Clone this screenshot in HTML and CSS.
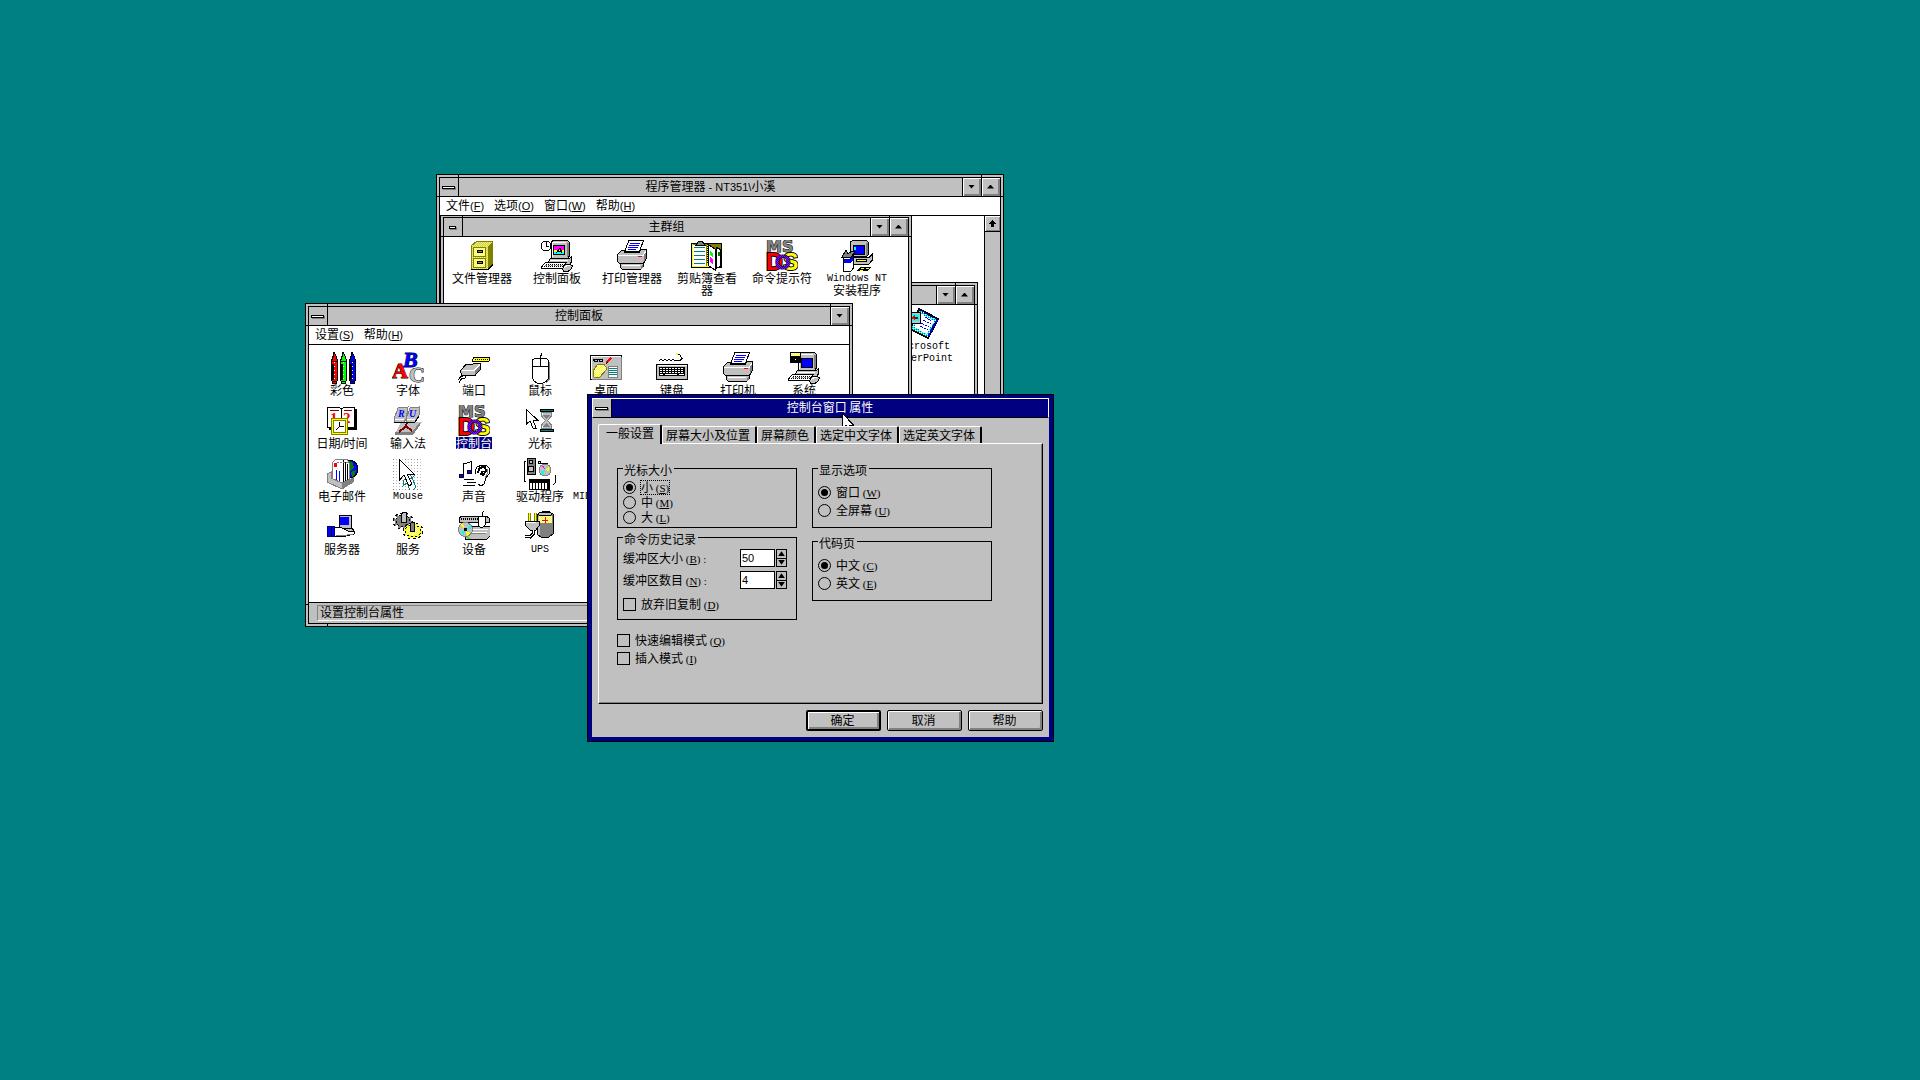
FILE: index.html
```html
<!DOCTYPE html>
<html lang="zh-CN">
<head>
    <meta charset="UTF-8">
    <meta name="viewport" content="width=device-width, initial-scale=1.0">
    <title>程序管理器</title>
    <link rel="stylesheet" href="styles.css">
</head>
<body>
    <!-- Shared drawings -->
    <svg class="sprites" width="0" height="0">
        <defs>
            <pattern id="dither-yellow" width="2" height="2" patternUnits="userSpaceOnUse">
                <rect width="2" height="2" fill="#ffff00"/>
                <rect width="1" height="1" fill="#ffffff"/>
                <rect x="1" y="1" width="1" height="1" fill="#ffffff"/>
            </pattern>
            <pattern id="dither-gold" width="2" height="2" patternUnits="userSpaceOnUse">
                <rect width="2" height="2" fill="#ffff00"/>
                <rect width="1" height="1" fill="#c0c0c0"/>
                <rect x="1" y="1" width="1" height="1" fill="#c0c0c0"/>
            </pattern>
            <pattern id="dither-purple" width="2" height="2" patternUnits="userSpaceOnUse">
                <rect width="2" height="2" fill="#0000ff"/>
                <rect width="1" height="1" fill="#c000c0"/>
                <rect x="1" y="1" width="1" height="1" fill="#c000c0"/>
            </pattern>
            <pattern id="dither-cyan" width="2" height="2" patternUnits="userSpaceOnUse">
                <rect width="2" height="2" fill="#00ffff"/>
                <rect width="1" height="1" fill="#ffffff"/>
                <rect x="1" y="1" width="1" height="1" fill="#008080"/>
            </pattern>
            <pattern id="grid-dots" width="6" height="6" patternUnits="userSpaceOnUse">
                <rect x="1" y="1" width="1" height="1" fill="#808080"/>
                <rect x="4" y="1" width="1" height="1" fill="#c0c0c0"/>
                <rect x="1" y="4" width="1" height="1" fill="#c0c0c0"/>
                <rect x="4" y="4" width="1" height="1" fill="#c0c0c0"/>
            </pattern>
        </defs>
        <symbol id="printer" viewBox="0 0 32 32">
            <path d="M13 .5H27.5L23.5 11.5H8.500Z" fill="#fff" stroke="#000"/>
            <path d="M14 3.500H24M13 5.500H23M12 7.500H22M12 9.500H20" stroke="#0000ff"/>
            <path d="M1.500 14.500L5.500 10.500H9L8.500 12.500H23L25 9.500H30.500V18L27.500 23.500H3.500L1.500 21.500Z" fill="#c0c0c0" stroke="#000"/>
            <path d="M2 15.500H27L30 11" fill="none" stroke="#fff"/>
            <path d="M28 15V22L30 18V12Z" fill="#808080"/>
            <path d="M22 16.500H26" stroke="#ff0000"/>
            <path d="M5.500 23.500H27.500V26L24.500 29.500H6.500L4.500 27.500V24.500Z" fill="#c0c0c0" stroke="#000"/>
            <path d="M6 25.500H24" stroke="#fff"/>
            <path d="M25 29V26L27 24V27Z" fill="#808080"/>
        </symbol>
        <symbol id="pc" viewBox="0 0 32 32">
            <path d="M10.500 1.500L12.500 .5H26.500L28.500 2.500V16L26.500 18.500H10.500Z" fill="#c0c0c0" stroke="#000"/>
            <path d="M11.500 17V2.500H25" fill="none" stroke="#fff"/>
            <path d="M26 3V18L28 15V3Z" fill="#808080"/>
            <path d="M9.500 18.500H28L30.500 17V22L27.500 25.500H6L8.500 19.500Z" fill="#c0c0c0" stroke="#000"/>
            <path d="M9 20.500H27" stroke="#fff"/>
            <path d="M4.500 22.500H25.500L21.500 28.500H.5V27Z" fill="#fff" stroke="#000"/>
            <path d="M5 24.500H24M3 26.500H22" stroke="#000" stroke-dasharray="1 1"/>
            <path d="M4 25.500H23" stroke="#808080" stroke-dasharray="2 1"/>
            <path d="M22.500 26L25 24.500H29L31.500 25.500L30 29L27 31.500H23L21.500 29.500Z" fill="#c0c0c0" stroke="#000"/>
            <path d="M23 28L26 25.500H29" fill="none" stroke="#fff"/>
        </symbol>
    </svg>

    <main class="desktop">
        <!-- Program Manager -->
        <section class="window program-manager">
            <div class="frame">
                <header class="title-bar">
                    <button class="sys-menu" aria-label="系统菜单"><span></span></button>
                    <h1 class="title">程序管理器<span class="latin"> - NT351\</span>小溪</h1>
                    <button class="size-btn" aria-label="最小化"><span class="arrow down"></span></button>
                    <button class="size-btn" aria-label="最大化"><span class="arrow up"></span></button>
                </header>
                <nav class="menu-bar">
                    <button>文件<span class="latin">(<u>F</u>)</span></button>
                    <button>选项<span class="latin">(<u>O</u>)</span></button>
                    <button>窗口<span class="latin">(<u>W</u>)</span></button>
                    <button>帮助<span class="latin">(<u>H</u>)</span></button>
                </nav>
                <div class="mdi-client">
                    <!-- Office group -->
                    <section class="window office-group">
                        <div class="frame">
                            <header class="title-bar">
                                <button class="sys-menu small" aria-label="系统菜单"><span></span></button>
                                <h2 class="title"></h2>
                                <button class="size-btn" aria-label="最小化"><span class="arrow down"></span></button>
                                <button class="size-btn" aria-label="最大化"><span class="arrow up"></span></button>
                            </header>
                            <div class="icon-row office-icons">
                                <button class="icon">
                                    <svg viewBox="0 0 32 32">
                                        <path d="M12 1L31 11L21 30L3 21Z" fill="url(#dither-cyan)" stroke="#000" stroke-width="2"/>
                                        <path d="M13 5L27 13L20 26L7 19Z" fill="#fff"/>
                                        <path d="M12 2L30 11" stroke="#000080" stroke-width="2" stroke-dasharray="2 1"/>
                                        <path d="M30 12L21 29" stroke="#0000ff" stroke-width="2" stroke-dasharray="3 2"/>
                                        <path d="M16 12L24 16M14 15L22 19M13 18L21 22M18 9L25 13" stroke="#0000ff" stroke-dasharray="3 1"/>
                                        <rect x=".5" y="4.500" width="13" height="11" fill="#c0c0c0" stroke="#000"/>
                                        <rect x="2" y="6" width="10" height="7" fill="#00ffff"/>
                                        <path d="M4 10L8 7V12Z" fill="#ff0000"/>
                                        <path d="M7 9H11V11H8" fill="#800000"/>
                                    </svg>
                                    <span class="latin-mono">Microsoft</span>
                                    <span class="latin-mono">PowerPoint</span>
                                </button>
                            </div>
                        </div>
                    </section>

                    <!-- Main group -->
                    <section class="window main-group">
                        <div class="frame">
                            <header class="title-bar">
                                <button class="sys-menu small" aria-label="系统菜单"><span></span></button>
                                <h2 class="title">主群组</h2>
                                <button class="size-btn" aria-label="最小化"><span class="arrow down"></span></button>
                                <button class="size-btn" aria-label="最大化"><span class="arrow up"></span></button>
                            </header>
                            <div class="icon-row main-icons">
                                <button class="icon">
                                    <svg viewBox="0 0 32 32">
                                        <path d="M5.500 5.500L10.500 1.500H26.500V24.500L21.500 29.500H5.500Z" fill="url(#dither-gold)" stroke="#808000"/>
                                        <path d="M22 6L26 2V24L22 29Z" fill="#808000"/>
                                        <rect x="7.500" y="7.500" width="12" height="9" fill="url(#dither-yellow)" stroke="#808000"/>
                                        <rect x="7.500" y="18.500" width="12" height="9" fill="url(#dither-yellow)" stroke="#808000"/>
                                        <rect x="11.500" y="10.500" width="5" height="2" fill="#808080" stroke="#000"/>
                                        <rect x="11.500" y="21.500" width="5" height="2" fill="#808080" stroke="#000"/>
                                        <path d="M5 29.500H22L27 24.500" fill="none" stroke="#000"/>
                                    </svg>
                                    <span>文件管理器</span>
                                </button>
                                <button class="icon">
                                    <svg viewBox="0 0 32 32">
                                        <use href="#pc"/>
                                        <rect x="12" y="5" width="12" height="10" fill="#000"/>
                                        <rect x="13" y="6" width="10" height="8" fill="#ff00ff"/>
                                        <path d="M13 10H23V12H13Z" fill="#ffff00"/>
                                        <path d="M13 12H23V14H13Z" fill="#00ffff"/>
                                        <path d="M15 13L19 8L21 13M17 11H21" fill="none" stroke="#000"/>
                                        <circle cx="5" cy="6" r="5" fill="#fff" stroke="#000"/>
                                        <path d="M5.500 2V6.500H8" fill="none" stroke="#000"/>
                                    </svg>
                                    <span>控制面板</span>
                                </button>
                                <button class="icon">
                                    <svg><use href="#printer"/></svg>
                                    <span>打印管理器</span>
                                </button>
                                <button class="icon">
                                    <svg viewBox="0 0 32 32">
                                        <rect x=".5" y="3.500" width="30" height="24" fill="#808000" stroke="#000"/>
                                        <rect x="2" y="5" width="13" height="21" fill="#fff"/>
                                        <rect x="16" y="5" width="3" height="21" fill="#ffff00"/>
                                        <path d="M3 7.500H14M3 11.500H14M3 15.500H14M3 19.500H14M3 23.500H14" stroke="#008080"/>
                                        <path d="M1.500 4V27M1 26.500H30" stroke="#ffff00"/>
                                        <path d="M5 5L8 1H11L14 5Z" fill="#808080" stroke="#000"/>
                                        <path d="M17.500 4.500L24.500 9.500V30.500L17.500 25.500Z" fill="#fff" stroke="#000"/>
                                        <path d="M25.500 7.500L29.500 9.500V26.500L25.500 28Z" fill="#fff" stroke="#000"/>
                                        <path d="M19 11L22 13V17L19 15Z" fill="#00ff00"/>
                                        <path d="M19 17L22 19V24L19 22Z" fill="#ff00ff"/>
                                        <path d="M16.500 4V24" stroke="#000" stroke-dasharray="1 1"/>
                                        <rect x="27" y="12" width="2" height="4" fill="#008000"/>
                                    </svg>
                                    <span>剪贴簿查看<br>器</span>
                                </button>
                                <button class="icon">
                                    <svg viewBox="0 0 32 32">
                                        <text class="ms" x="0" y="12">MS</text>
                                        <text class="dos-letter dos-d" x="0" y="30">D</text>
                                        <text class="dos-letter dos-s" x="17" y="30">S</text>
                                        <text class="dos-letter dos-o" x="9" y="29">O</text>
                                    </svg>
                                    <span>命令提示符</span>
                                </button>
                                <button class="icon">
                                    <svg viewBox="0 0 32 32">
                                        <path d="M9.500 2L11.500 .5H25.500L27.500 2.500V14L25.500 16.500H9.500Z" fill="#c0c0c0" stroke="#000"/>
                                        <path d="M25 3V16L27 14V3Z" fill="#808080"/>
                                        <rect x="12" y="5" width="11" height="9" fill="#0000ff" stroke="#000"/>
                                        <path d="M13 7H15V10H13Z" fill="#00ffff"/>
                                        <path d="M12.500 17.500H28L31.500 14V20L27.500 24.500H12.500Z" fill="#c0c0c0" stroke="#000"/>
                                        <path d="M15 19.500H25V21.500H15Z" fill="#ffff00" stroke="#000"/>
                                        <path d="M1 17L5 10L7 14L11 11L14 12L12 17Z" fill="#808080" stroke="#000"/>
                                        <path d="M2.500 17.500H9.500L12.500 14V28L9.500 31.500H2.500Z" fill="#fff" stroke="#000"/>
                                        <path d="M3 19H9L12 16V20L9 23H3Z" fill="#0000ff"/>
                                        <path d="M3 19H9L12 16" fill="none" stroke="#000080"/>
                                        <path d="M19 27H30L27 31H16Z" fill="#000"/>
                                        <path d="M20 28H23M25 28H28M19 30H22" stroke="#ffff00"/>
                                    </svg>
                                    <span class="latin-mono">Windows NT</span>
                                    <span>安装程序</span>
                                </button>
                            </div>
                        </div>
                    </section>

                    <div class="scroll-bar">
                        <button aria-label="向上滚动">
                            <svg viewBox="0 0 7 7"><path d="M3 0H4V1H5V2H6V3H7V4H5V7H2V4H0V3H1V2H2V1H3Z"/></svg>
                        </button>
                    </div>
                </div>
            </div>
        </section>

        <!-- Control Panel -->
        <section class="window control-panel">
            <div class="frame">
                <header class="title-bar">
                    <button class="sys-menu" aria-label="系统菜单"><span></span></button>
                    <h2 class="title">控制面板</h2>
                    <button class="size-btn" aria-label="最小化"><span class="arrow down"></span></button>
                </header>
                <nav class="menu-bar">
                    <button>设置<span class="latin">(<u>S</u>)</span></button>
                    <button>帮助<span class="latin">(<u>H</u>)</span></button>
                </nav>
                <div class="applets">
                    <div class="icon-row">
                        <button class="icon">
                            <svg viewBox="0 0 32 32">
                                <path d="M5.500 9L7.500 3L8 .5L10 4L11.500 9V28L10 31.500H7L5.500 28Z" fill="#ff0000" stroke="#000"/>
                                <path d="M14.500 9L16.500 3L17 .5L19 4L20.500 9V28L19 31.500H16L14.500 28Z" fill="#00ff00" stroke="#000"/>
                                <path d="M23.500 9L25.500 3L26 .5L28 4L29.500 9V28L28 31.500H25L23.500 28Z" fill="#0000ff" stroke="#000"/>
                                <path d="M5 12H8V28H5ZM14 12H17V28H14ZM23 12H26V28H23Z" fill="#000"/>
                                <path d="M6 9.500H11M15 9.500H20M24 9.500H29M6 29.500H11M15 29.500H20M24 29.500H29" stroke="#000"/>
                                <path d="M8.500 10V28M17.500 10V28M26.500 10V28" stroke="#fff" stroke-dasharray="1 3"/>
                            </svg>
                            <span>彩色</span>
                        </button>
                        <button class="icon">
                            <svg viewBox="0 0 32 32">
                                <text class="font-letter font-b" x="11" y="15">B</text>
                                <text class="font-letter font-c" x="17" y="30">C</text>
                                <text class="font-letter font-a" x="0" y="26">A</text>
                            </svg>
                            <span>字体</span>
                        </button>
                        <button class="icon">
                            <svg viewBox="0 0 32 32">
                                <path d="M15.500 6L17 5.500H31.500V8.500L30 9.500H14.500V7.500Z" fill="#ffff00" stroke="#000"/>
                                <path d="M17 7.500H30" stroke="#000" stroke-dasharray="1 1"/>
                                <path d="M2.500 18.500L8 12.500L22.500 11.500V17L17 23.500H3.500Z" fill="#c0c0c0" stroke="#000"/>
                                <path d="M4 18.500H16L22 12.500" fill="none" stroke="#fff"/>
                                <path d="M17 23V18L22 13V17Z" fill="#808080"/>
                                <path d="M8 24L7 26H4L1 31M5 24H3L.5 28" fill="none" stroke="#000"/>
                            </svg>
                            <span>端口</span>
                        </button>
                        <button class="icon">
                            <svg viewBox="0 0 32 32">
                                <path d="M16.500 6V3.500H17.500V1" fill="none" stroke="#000"/>
                                <path d="M8.500 8L10.500 6.500H22.500L24.500 8.500V26L22 29.500L18 31.500H14L10.500 29.500L8.500 26Z" fill="#fff" stroke="#000"/>
                                <path d="M8 14.500H25M16.500 6V14" stroke="#000"/>
                                <path d="M25.500 10V27L22 31" fill="none" stroke="#808080"/>
                            </svg>
                            <span>鼠标</span>
                        </button>
                        <button class="icon">
                            <svg viewBox="0 0 32 32">
                                <rect x=".5" y="3.500" width="31" height="24" rx="1" fill="#c0c0c0" stroke="#000"/>
                                <path d="M1.500 27V4.500H31" fill="none" stroke="#fff"/>
                                <path d="M31 5V27H2" fill="none" stroke="#808080"/>
                                <path d="M3.500 7.500H7.500V9.500H4.500ZM9.500 7.500H12.500V9.500H9.500ZM7 7.500H10" fill="none" stroke="#000"/>
                                <path d="M16 11L21 6" stroke="#ff0000" stroke-width="2"/>
                                <path d="M16 12L18 10" stroke="#000"/>
                                <path d="M7 13L14 12L17 17L10 25H4L3 19Z" fill="url(#dither-yellow)" stroke="#808000"/>
                                <rect x="18.500" y="14.500" width="9" height="11" fill="#fff" stroke="#808080"/>
                                <path d="M19 16.500H27M19 18.500H27M19 20.500H27M19 22.500H27" stroke="#008080"/>
                            </svg>
                            <span>桌面</span>
                        </button>
                        <button class="icon">
                            <svg viewBox="0 0 32 32">
                                <path d="M3 8.500L5 7.500L7 8.500L9 7.500L11 8.500L13 7.500L15 8.500L17 7.500L19 8.500L24 8.500L26 6.500L24 3L20 2" fill="none" stroke="#000"/>
                                <rect x="20" y="1" width="2" height="2" fill="#ffff00"/>
                                <rect x=".5" y="12.500" width="31" height="15" rx="1" fill="#c0c0c0" stroke="#000"/>
                                <path d="M1.500 13.500H31" stroke="#fff"/>
                                <rect x="3" y="15" width="26" height="9" fill="#000"/>
                                <path d="M4 16.500H28M4 18.500H28M4 20.500H28" stroke="#fff" stroke-dasharray="2 1"/>
                                <path d="M4 22.500H7M9 22.500H21M23 22.500H28" stroke="#fff"/>
                            </svg>
                            <span>键盘</span>
                        </button>
                        <button class="icon">
                            <svg><use href="#printer"/></svg>
                            <span>打印机</span>
                        </button>
                        <button class="icon">
                            <svg viewBox="0 0 32 32">
                                <use href="#pc"/>
                                <rect x="13" y="6" width="11" height="9" fill="#0000ff" stroke="#000"/>
                                <rect x="2" y="0" width="11" height="11" fill="#000"/>
                                <rect x="3" y="1" width="9" height="3" fill="url(#dither-yellow)"/>
                                <rect x="7" y="7" width="1" height="1" fill="#fff"/>
                            </svg>
                            <span>系统</span>
                        </button>
                    </div>

                    <div class="icon-row">
                        <button class="icon">
                            <svg viewBox="0 0 32 32">
                                <path d="M3 4H31V25H3Z" fill="#000"/>
                                <path d="M1.500 2.500H13L15.500 4L18 2.500H28.500V22.500H1.500Z" fill="#fff" stroke="#000"/>
                                <path d="M4 5.500H13M18 5.500H26" stroke="#800000"/>
                                <path d="M15.500 4V14" stroke="#000"/>
                                <text class="calendar-digit" x="4" y="18">1</text>
                                <text class="calendar-digit" x="17" y="18">2</text>
                                <rect x="6.500" y="14.500" width="14" height="14" fill="#fff" stroke="#808000" stroke-width="3"/>
                                <rect x="6.500" y="14.500" width="14" height="14" fill="none" stroke="#ffff00"/>
                                <path d="M13.500 17V21.500H18M13 22L10 25" fill="none" stroke="#000"/>
                            </svg>
                            <span>日期<span class="latin">/</span>时间</span>
                        </button>
                        <button class="icon">
                            <svg viewBox="0 0 32 32">
                                <path d="M3 29L9 17H30L21 30Z" fill="#c0c0c0"/>
                                <path d="M3 27H20L28 17V20L21 30H3Z" fill="#808080"/>
                                <path d="M2 14L6 3L16 2L14 14L12 17H3Z" fill="#c0c0c0" stroke="#808080"/>
                                <path d="M14 14L18 3L27 2V10L23 17H15Z" fill="#c0c0c0" stroke="#808080"/>
                                <path d="M3 14H12M15 14H23" stroke="#fff"/>
                                <path d="M2 17H23L27 11" fill="none" stroke="#000"/>
                                <text class="key-letter" x="6" y="12">R</text>
                                <text class="key-letter" x="17" y="12">U</text>
                                <path d="M15 18L13 22L7 27M14 21L20 26" fill="none" stroke="#800000" stroke-width="2"/>
                            </svg>
                            <span>输入法</span>
                        </button>
                        <button class="icon selected">
                            <svg viewBox="0 0 32 32">
                                <text class="ms" x="0" y="12">MS</text>
                                <text class="dos-letter dos-d" x="0" y="30">D</text>
                                <text class="dos-letter dos-s" x="17" y="30">S</text>
                                <text class="dos-letter dos-o" x="9" y="29">O</text>
                            </svg>
                            <span>控制台</span>
                        </button>
                        <button class="icon">
                            <svg viewBox="0 0 32 32">
                                <path d="M2.500 4.500V19L6 16L9 23H12L9 15H13.500Z" fill="#fff" stroke="#000"/>
                                <path d="M16 4H29V6H16ZM16 24H29V26H16Z" fill="#008080" stroke="#000"/>
                                <path d="M17.500 7.500H27.500V11L23.500 15.500L27.500 20V23.500H17.500V20L21.500 15.500L17.500 11Z" fill="#c0c0c0" stroke="#808080"/>
                                <path d="M19 10H26L22 14ZM22 18L26 22H19Z" fill="#808080"/>
                                <path d="M18.500 8V10M18.500 21V23" stroke="#fff"/>
                            </svg>
                            <span>光标</span>
                        </button>
                    </div>

                    <div class="icon-row">
                        <button class="icon">
                            <svg viewBox="0 0 32 32">
                                <circle cx="23" cy="11" r="9" fill="#0000ff" stroke="#000"/>
                                <path d="M19 2L26 4L28 9L24 13L21 8ZM25 14L30 12L29 17L26 19Z" fill="#008000"/>
                                <path d="M6 5L10 1H21L23 5V24L14 27L6 22Z" fill="#fff" stroke="#808080"/>
                                <path d="M17 2V25M19 4V25M21 6V23" stroke="#000"/>
                                <path d="M11 4H22" stroke="#808080" stroke-dasharray="2 1"/>
                                <path d="M8 5H11V9H8Z" fill="#ff0000"/>
                                <path d="M10 12V22M13 13V23" stroke="#0000ff"/>
                                <path d="M1 16L5 14V20L16 25L27 20V24L16 31L1 24Z" fill="#c0c0c0" stroke="#808080"/>
                                <path d="M16 25L27 20V25L16 31Z" fill="#808080"/>
                            </svg>
                            <span>电子邮件</span>
                        </button>
                        <button class="icon">
                            <svg viewBox="0 0 32 32">
                                <rect x="1" y="0" width="30" height="32" fill="url(#grid-dots)"/>
                                <path d="M12 22L20 20L18 16L23 17L20 20L24 29L21 32H18L15 25L11 28Z" fill="#fff" stroke="#008080"/>
                                <path d="M7.500 1.500V22L12 17L17 28L20 26L15 16H22Z" fill="#fff" stroke="#000"/>
                            </svg>
                            <span class="latin-mono">Mouse</span>
                        </button>
                        <button class="icon">
                            <svg viewBox="0 0 32 32">
                                <path d="M5.500 18V6L13.500 3.500V14" fill="none" stroke="#000"/>
                                <circle cx="3.500" cy="18" r="2" fill="#0000ff" stroke="#000"/>
                                <circle cx="11.500" cy="14" r="2" fill="#0000ff" stroke="#000"/>
                                <path d="M6 21.500H16M9 24.500H18M5 27.500H17" stroke="#000"/>
                                <path d="M18 16L17 13L19 9L24 7H28L31 10V16L28 20L26 26L23 28L20 26" fill="#fff" stroke="#000"/>
                                <path d="M20 15L21 11L24 9H27L28 13L25 17L23 16L25 13" fill="none" stroke="#000" stroke-width="2"/>
                                <path d="M29 11V16L27 20" fill="none" stroke="#808080"/>
                            </svg>
                            <span>声音</span>
                        </button>
                        <button class="icon">
                            <svg viewBox="0 0 32 32">
                                <path d="M2 3.500H.5V23M2 23H0M16 5H23V8M31 17V25L29 27" fill="none" stroke="#000"/>
                                <rect x="3" y="0" width="8" height="16" fill="#808080" stroke="#000"/>
                                <circle cx="7" cy="4" r="2" fill="#c0c0c0" stroke="#000"/>
                                <circle cx="7" cy="11" r="3" fill="#c0c0c0" stroke="#000"/>
                                <rect x="14" y="3" width="2" height="2" fill="#fff" stroke="#000"/>
                                <circle cx="21" cy="12" r="6" fill="#c0c0c0" stroke="#808080"/>
                                <path d="M21 12L17 8H20Z" fill="#ff00ff"/>
                                <path d="M21 12L25 9V13Z" fill="#ffff00"/>
                                <path d="M21 12L16 14L20 17Z" fill="#00ffff"/>
                                <rect x="5" y="21" width="21" height="11" fill="#000"/>
                                <path d="M7 25V31M10 25V31M13 25V31M16 25V31M19 25V31M22 25V31" stroke="#fff" stroke-width="2"/>
                            </svg>
                            <span>驱动程序</span>
                        </button>
                        <button class="icon">
                            <svg viewBox="0 0 32 32"></svg>
                            <span class="latin-mono">MIDI Mapper</span>
                        </button>
                    </div>

                    <div class="icon-row">
                        <button class="icon">
                            <svg viewBox="0 0 32 32">
                                <rect x="13" y="4" width="12" height="13" fill="#c0c0c0" stroke="#000"/>
                                <rect x="14" y="6" width="9" height="8" fill="#0000ff"/>
                                <path d="M12 17H26L28 20L27 22H12Z" fill="#c0c0c0" stroke="#000"/>
                                <path d="M8 17L14 16L22 20H29L28 23L20 25H8Z" fill="#fff" stroke="#000"/>
                                <path d="M10 24H21L27 23" fill="none" stroke="#808080"/>
                                <path d="M1 15H8V25H1Z" fill="#0000ff" stroke="#000080"/>
                                <path d="M5.500 15V25" stroke="#000"/>
                            </svg>
                            <span>服务器</span>
                        </button>
                        <button class="icon">
                            <svg viewBox="0 0 32 32">
                                <ellipse cx="11" cy="10" rx="8" ry="6" pathLength="20" fill="#808080" stroke="#000" stroke-width="5" stroke-dasharray="1 1"/>
                                <ellipse cx="11" cy="10" rx="7" ry="6" fill="#808080" stroke="#000"/>
                                <ellipse cx="11" cy="10" rx="8" ry="6" pathLength="20" fill="none" stroke="#808080" stroke-width="3" stroke-dasharray="1 1"/>
                                <path d="M9 4L11 1H14V11H9Z" fill="#c0c0c0" stroke="#000"/>
                                <ellipse cx="21" cy="20" rx="8" ry="6" pathLength="20" fill="#808000" stroke="#000" stroke-width="5" stroke-dasharray="1 1"/>
                                <ellipse cx="21" cy="20" rx="8" ry="6" fill="url(#dither-yellow)" stroke="#000"/>
                                <ellipse cx="21" cy="20" rx="8" ry="6" pathLength="20" fill="none" stroke="#ffff00" stroke-width="3" stroke-dasharray="1 1"/>
                                <path d="M18 13L20 11H22V20H18Z" fill="#808080" stroke="#000"/>
                            </svg>
                            <span>服务</span>
                        </button>
                        <button class="icon">
                            <svg viewBox="0 0 32 32">
                                <path d="M1 7L4 5H28L31 7V11H1Z" fill="#c0c0c0" stroke="#000"/>
                                <path d="M3 8H28" stroke="#000" stroke-width="2" stroke-dasharray="1 1"/>
                                <path d="M24 8V2L26 0" fill="none" stroke="#000"/>
                                <path d="M7 18L11 15H32V25L29 28H7Z" fill="#c0c0c0" stroke="#000"/>
                                <path d="M14 18.500H30M14 21.500H29" stroke="#fff"/>
                                <path d="M14 22.500H28" stroke="#808080"/>
                                <path d="M20 5H27V14L25 16H22L20 14Z" fill="#fff" stroke="#000"/>
                                <circle cx="7.500" cy="18.500" r="7" fill="#c0c0c0" stroke="#808080"/>
                                <path d="M7 18L2 14L5 12Z" fill="#ffff00"/>
                                <path d="M8 18L13 14V18Z" fill="#00ffff"/>
                                <path d="M7 19L2 21L6 25Z" fill="#00ffff"/>
                                <path d="M8 20L12 22L9 25Z" fill="#ffff00"/>
                                <circle cx="7.500" cy="18.500" r="1.500" fill="#000"/>
                                <path d="M8 27L10 25L12 28Z" fill="#00ff00"/>
                            </svg>
                            <span>设备</span>
                        </button>
                        <button class="icon">
                            <svg viewBox="0 0 32 32">
                                <path d="M13 4L17 2L19 0H24L29 3V23L25 26H17L13 23Z" fill="#808080" stroke="#000"/>
                                <path d="M15 5V24" stroke="#c0c0c0" stroke-width="2"/>
                                <ellipse cx="21" cy="3" rx="7" ry="2" fill="#c0c0c0" stroke="#000"/>
                                <rect x="15" y="5" width="13" height="7" fill="url(#dither-yellow)"/>
                                <path d="M21 6V12M18 9H24" stroke="#ff0000"/>
                                <path d="M5 2V10M11 2V10" stroke="#808000" stroke-width="3"/>
                                <path d="M5.500 2V10M11.500 2V10" stroke="#ffff00"/>
                                <path d="M1 10H15V15L12 19H6L2 15Z" fill="#c0c0c0" stroke="#000"/>
                                <path d="M2 11.500H12" stroke="#fff"/>
                                <path d="M9 19V23L6 26L1 25" fill="none" stroke="#000" stroke-width="3"/>
                                <path d="M9 19V23L6 26L1 25" fill="none" stroke="#fff"/>
                            </svg>
                            <span class="latin-mono">UPS</span>
                        </button>
                    </div>
                </div>
                <footer class="status-bar"><p>设置控制台属性</p></footer>
            </div>
        </section>

        <!-- Console properties dialog -->
        <form class="dialog" onsubmit="return false">
            <header class="title-bar">
                <button type="button" class="sys-menu" aria-label="系统菜单"><span></span></button>
                <h2 class="title">控制台窗口 属性</h2>
            </header>
            <div class="dialog-body">
                <div class="tabs">
                    <button type="button" class="tab active">一般设置</button>
                    <button type="button" class="tab">屏幕大小及位置</button>
                    <button type="button" class="tab">屏幕颜色</button>
                    <button type="button" class="tab">选定中文字体</button>
                    <button type="button" class="tab">选定英文字体</button>
                </div>
                <div class="panel">
                    <div class="column">
                        <fieldset class="cursor-size">
                            <legend>光标大小</legend>
                            <label><input type="radio" name="cursor" checked><span class="focus">小 <span class="key">(<u>S</u>)</span></span></label>
                            <label><input type="radio" name="cursor"><span>中 <span class="key">(<u>M</u>)</span></span></label>
                            <label><input type="radio" name="cursor"><span>大 <span class="key">(<u>L</u>)</span></span></label>
                        </fieldset>
                        <fieldset class="history">
                            <legend>命令历史记录</legend>
                            <div class="field">
                                <label for="buffer-size"><span>缓冲区大小 <span class="key">(<u>B</u>) :</span></span></label>
                                <input type="text" id="buffer-size" value="50">
                                <span class="spinner">
                                    <button type="button" aria-label="增加"><span class="arrow up"></span></button>
                                    <button type="button" aria-label="减少"><span class="arrow down"></span></button>
                                </span>
                            </div>
                            <div class="field">
                                <label for="buffer-count"><span>缓冲区数目 <span class="key">(<u>N</u>) :</span></span></label>
                                <input type="text" id="buffer-count" value="4">
                                <span class="spinner">
                                    <button type="button" aria-label="增加"><span class="arrow up"></span></button>
                                    <button type="button" aria-label="减少"><span class="arrow down"></span></button>
                                </span>
                            </div>
                            <label class="discard"><input type="checkbox"><span>放弃旧复制 <span class="key">(<u>D</u>)</span></span></label>
                        </fieldset>
                        <div class="modes">
                            <label><input type="checkbox"><span>快速编辑模式 <span class="key">(<u>Q</u>)</span></span></label>
                            <label><input type="checkbox"><span>插入模式 <span class="key">(<u>I</u>)</span></span></label>
                        </div>
                    </div>
                    <div class="column right">
                        <fieldset>
                            <legend>显示选项</legend>
                            <label><input type="radio" name="display" checked><span>窗口 <span class="key">(<u>W</u>)</span></span></label>
                            <label><input type="radio" name="display"><span>全屏幕 <span class="key">(<u>U</u>)</span></span></label>
                        </fieldset>
                        <fieldset>
                            <legend>代码页</legend>
                            <label><input type="radio" name="codepage" checked><span>中文 <span class="key">(<u>C</u>)</span></span></label>
                            <label><input type="radio" name="codepage"><span>英文 <span class="key">(<u>E</u>)</span></span></label>
                        </fieldset>
                    </div>
                </div>
                <div class="actions">
                    <button type="submit" class="push default">确定</button>
                    <button type="button" class="push">取消</button>
                    <button type="button" class="push">帮助</button>
                </div>
            </div>
        </form>

        <!-- Mouse pointer -->
        <svg class="pointer" viewBox="0 0 12 20">
            <path d="M.5 .5V16L4 12.500L7 19H9.500L7 12H11.500Z" fill="#fff" stroke="#000"/>
        </svg>
    </main>
</body>
</html>
```
FILE: styles.css
```css
* {
    box-sizing: border-box;
}

body {
    margin: 0;
    background: #008080;
    color: #000;
    font: 12px/12px "Noto Sans CJK SC", sans-serif;
}

button,
input {
    margin: 0;
    padding: 0;
    border: none;
    border-radius: 0;
    background: none;
    color: inherit;
    font: inherit;
}

h1,
h2,
p {
    margin: 0;
    font-size: 12px;
    font-weight: normal;
}

svg {
    display: block;
    shape-rendering: crispEdges;
}

u {
    text-underline-offset: 1px;
}

.sprites {
    position: absolute;
}

.latin {
    font-family: "Liberation Sans", sans-serif;
    font-size: 11px;
}

.latin-mono {
    font-family: "Liberation Mono", monospace;
    font-size: 10px;
}

.key {
    font-family: "Liberation Serif", serif;
    font-size: 11px;
}

.desktop {
    position: relative;
    min-height: 100vh;
    overflow: hidden;
}

/* Windows */
.window {
    position: absolute;
    border: 1px solid #000;
    padding: 2px;
    /* the four lines mark the sizing corners of the frame */
    background:
        linear-gradient(#000, #000) left 21px top / 1px 100% no-repeat,
        linear-gradient(#000, #000) right 21px top / 1px 100% no-repeat,
        linear-gradient(#000, #000) left top 21px / 100% 1px no-repeat,
        linear-gradient(#000, #000) left bottom 21px / 100% 1px no-repeat,
        #c0c0c0;
}

.frame {
    display: flex;
    flex-direction: column;
    height: 100%;
    border: 1px solid #000;
    background: #fff;
}

.program-manager {
    left: 436px;
    top: 174px;
    width: 568px;
    height: 440px;
}

.control-panel {
    left: 305px;
    top: 303px;
    width: 548px;
    height: 324px;
}

.main-group {
    left: 0;
    top: -2px;
    width: 472px;
    height: 340px;
}

.office-group {
    left: 200px;
    top: 66px;
    width: 338px;
    height: 250px;
}

.title-bar {
    display: flex;
    flex: none;
    height: 19px;
    border-bottom: 1px solid #000;
    background: #c0c0c0;
}

.title {
    flex: 1;
    line-height: 16px;
    text-align: center;
    white-space: pre;
}

.sys-menu {
    display: flex;
    align-items: center;
    justify-content: center;
    width: 19px;
    padding-right: 1px;
    border-right: 1px solid #000;
    background: #c0c0c0;
}

.sys-menu span {
    width: 13px;
    height: 3px;
    border: 1px solid #000;
    background: #fff;
    box-shadow: 1px 1px #808080;
}

.sys-menu.small span {
    width: 7px;
}

.size-btn {
    display: flex;
    align-items: center;
    justify-content: center;
    width: 19px;
    padding: 0 1px 1px 0;
    border-left: 1px solid #000;
    background: #c0c0c0;
    box-shadow: inset 1px 1px #fff, inset -2px -2px #808080;
}

.arrow {
    width: 7px;
    height: 4px;
    background: #000;
}

.arrow.down {
    clip-path: polygon(0 0, 100% 0, 50% 100%);
}

.arrow.up {
    clip-path: polygon(50% 0, 100% 100%, 0 100%);
}

.menu-bar {
    display: flex;
    flex: none;
    gap: 10px;
    height: 19px;
    padding: 0 0 2px 6px;
    border-bottom: 1px solid #000;
}

.mdi-client {
    position: relative;
    display: flex;
    justify-content: flex-end;
    flex: 1;
    overflow: hidden;
}

.scroll-bar {
    width: 16px;
    border-left: 1px solid #000;
    background: #c0c0c0;
}

.scroll-bar button {
    display: flex;
    align-items: center;
    justify-content: center;
    width: 15px;
    height: 16px;
    border-bottom: 1px solid #000;
    box-shadow: inset 1px 1px #fff, inset -1px -1px #808080;
}

.scroll-bar svg {
    width: 7px;
    height: 7px;
}

/* Icons */
.icon-row {
    display: flex;
}

.icon {
    display: flex;
    flex-direction: column;
    align-items: center;
    flex: none;
    width: 66px;
    height: 53px;
    white-space: nowrap;
}

.icon svg {
    flex: none;
    width: 32px;
    height: 32px;
}

.icon > .latin-mono {
    padding-top: 1px;
    line-height: 11px;
}

.icon.selected > span {
    background: #000080;
    color: #fff;
}

.main-icons,
.office-icons {
    padding-top: 3px;
}

.main-icons .icon,
.office-icons .icon {
    width: 75px;
    height: 56px;
    padding-left: 1px;
}

.office-icons {
    justify-content: flex-end;
    padding-right: 14px;
}

.applets {
    flex: 1;
    padding-top: 7px;
    overflow: hidden;
}

.ms {
    font: bold 16px "DejaVu Sans", sans-serif;
    fill: #808080;
    stroke: #000;
    stroke-width: 1px;
    paint-order: stroke;
}

.dos-letter {
    font: bold 23px "Liberation Sans", sans-serif;
    stroke: #000;
    stroke-width: 2px;
    paint-order: stroke;
}

.dos-d {
    fill: #ff0000;
}

.dos-o {
    fill: url(#dither-purple);
    font-size: 20px;
    stroke-width: 1px;
}

.dos-s {
    fill: #ffff00;
}

.font-letter {
    font: bold 22px "Liberation Serif", serif;
    stroke: #000;
    stroke-width: 1px;
    paint-order: stroke;
}

.font-a {
    fill: #ff0000;
}

.font-b {
    font-style: italic;
    fill: #0000ff;
}

.font-c {
    fill: #c0c0c0;
}

.calendar-digit {
    font: bold 15px "Liberation Serif", serif;
    fill: #ff0000;
}

.key-letter {
    font: italic bold 10px "Liberation Serif", serif;
    fill: #0000ff;
}

.status-bar {
    flex: none;
    height: 21px;
    padding: 2px 0 2px 8px;
    border-top: 1px solid #000;
    background: #c0c0c0;
}

.status-bar p {
    height: 16px;
    padding-left: 2px;
    border: 1px solid;
    border-color: #808080 #fff #fff #808080;
    line-height: 12px;
}

/* Dialog */
.dialog {
    position: absolute;
    left: 587px;
    top: 394px;
    display: flex;
    flex-direction: column;
    width: 467px;
    height: 348px;
    padding: 3px 4px 4px;
    border: 1px solid #000;
    background: #000080;
}

.dialog .title-bar {
    height: 20px;
    border: 1px solid #fff;
    border-bottom-color: #000;
    background: #000080;
    color: #fff;
}

.dialog .sys-menu {
    color: #000;
}

.dialog-body {
    display: flex;
    flex-direction: column;
    flex: 1;
    padding: 6px;
    background: #c0c0c0;
}

.tabs {
    display: flex;
    align-items: flex-end;
    height: 20px;
    /* the open tab hides the top edge of the panel */
    margin-bottom: -1px;
    z-index: 1;
}

.tab {
    height: 17px;
    margin-bottom: 1px;
    padding: 0 5px 1px 3px;
    border: 1px solid #fff;
    border-right: 2px solid #000;
    border-bottom: none;
    border-radius: 2px 2px 0 0;
    background: #c0c0c0;
    white-space: nowrap;
}

.tab.active {
    height: 20px;
    margin-bottom: 0;
    padding: 0 6px 4px 7px;
}

.panel {
    display: flex;
    flex: 1;
    gap: 15px;
    padding: 16px 18px;
    border: 1px solid #fff;
    border-right-color: #000;
    border-bottom-color: #000;
    box-shadow: inset -1px -1px #808080;
}

.column {
    display: flex;
    flex-direction: column;
    gap: 1px;
    width: 180px;
}

.column.right {
    gap: 5px;
}

fieldset {
    margin: 0;
    padding: 7px 9px 8px 5px;
    border: 1px solid #000;
}

legend {
    padding: 4px 2px 0 1px;
}

fieldset label {
    display: flex;
    align-items: center;
    height: 18px;
}

.cursor-size {
    padding-top: 4px;
    padding-bottom: 2px;
}

.cursor-size label {
    height: 15px;
}

.history {
    padding-top: 4px;
}

.history .field {
    display: flex;
    align-items: center;
    margin-bottom: 4px;
}

.history .discard {
    height: 13px;
    margin-top: 9px;
}

.modes {
    display: flex;
    flex-direction: column;
    gap: 5px;
    margin-top: 13px;
}

.modes label {
    display: flex;
    align-items: center;
    height: 13px;
}

input[type="radio"],
input[type="checkbox"] {
    display: flex;
    align-items: center;
    justify-content: center;
    flex: none;
    width: 13px;
    height: 13px;
    margin-right: 5px;
    border: 1px solid #000;
    appearance: none;
}

input[type="radio"] {
    border-radius: 50%;
}

input[type="radio"]:checked::before {
    width: 7px;
    height: 7px;
    border-radius: 50%;
    background: #000;
    content: "";
}

.focus {
    outline: 1px dotted #000;
}

input[type="text"] {
    width: 35px;
    height: 18px;
    margin-left: auto;
    padding: 0 1px;
    border: 1px solid #000;
    background: #fff;
    font-family: "Liberation Sans", sans-serif;
    font-size: 11px;
}

.spinner {
    display: flex;
    flex-direction: column;
    width: 11px;
    height: 18px;
    margin-left: 1px;
    border: 1px solid #000;
}

.spinner button {
    display: flex;
    align-items: center;
    justify-content: center;
    flex: 1;
}

.spinner .arrow {
    height: 5px;
}

.spinner button + button {
    border-top: 1px solid #000;
}

.actions {
    display: flex;
    justify-content: flex-end;
    gap: 6px;
    margin-top: 6px;
}

.push {
    width: 75px;
    height: 21px;
    padding: 0 2px 2px 0;
    border: 1px solid #000;
    border-radius: 2px;
    box-shadow: inset 1px 1px #fff, inset -2px -2px #808080;
}

.push.default {
    border-width: 2px;
}

.pointer {
    position: absolute;
    left: 842px;
    top: 413px;
    width: 12px;
    height: 20px;
}
```
